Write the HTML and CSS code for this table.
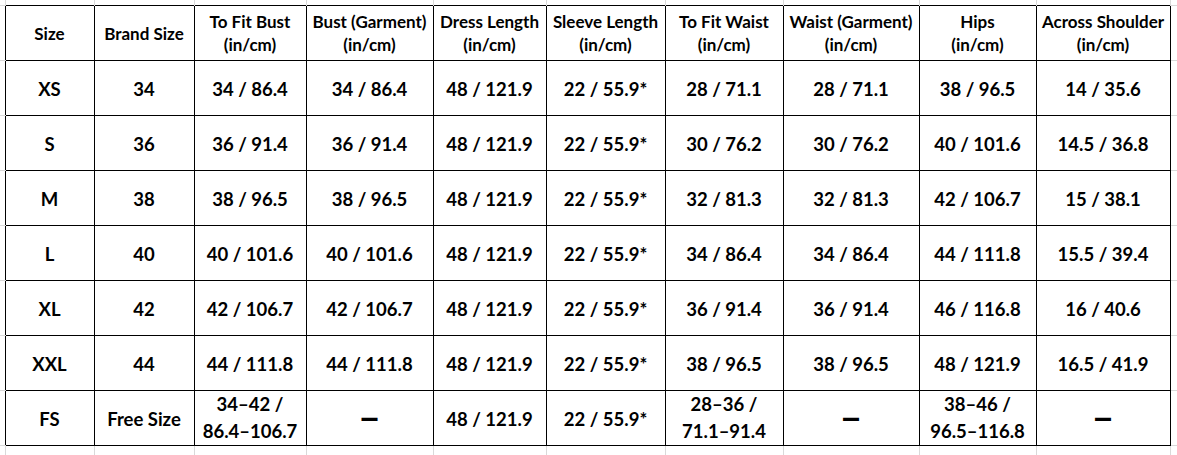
FILE: index.html
```html
<!DOCTYPE html>
<html lang="en">
<head>
<meta charset="utf-8">
<title>Size Chart</title>
<link rel="stylesheet" href="styles.css">
</head>
<body>
<table class="sheet">
  <colgroup>
    <col class="c-stub-l">
    <col class="c1"><col class="c2"><col class="c3"><col class="c4"><col class="c5">
    <col class="c6"><col class="c7"><col class="c8"><col class="c9"><col class="c10">
    <col class="c-stub-r">
  </colgroup>
  <tr class="r-top">
    <td class="corner"></td>
    <td class="stub-t"></td><td class="stub-t"></td><td class="stub-t"></td><td class="stub-t"></td><td class="stub-t"></td>
    <td class="stub-t"></td><td class="stub-t"></td><td class="stub-t"></td><td class="stub-t"></td><td class="stub-t"></td>
    <td class="corner"></td>
  </tr>
  <tr class="r-head">
    <td class="stub-l"></td>
    <th class="cell">Size</th>
    <th class="cell">Brand Size</th>
    <th class="cell">To Fit Bust<br>(in/cm)</th>
    <th class="cell">Bust (Garment)<br>(in/cm)</th>
    <th class="cell">Dress Length<br>(in/cm)</th>
    <th class="cell">Sleeve Length<br>(in/cm)</th>
    <th class="cell">To Fit Waist<br>(in/cm)</th>
    <th class="cell">Waist (Garment)<br>(in/cm)</th>
    <th class="cell">Hips<br>(in/cm)</th>
    <th class="cell">Across Shoulder<br>(in/cm)</th>
    <td class="stub-r"></td>
  </tr>
  <tr class="r-data">
    <td class="stub-l"></td>
    <td class="cell">XS</td><td class="cell">34</td><td class="cell">34 / 86.4</td><td class="cell">34 / 86.4</td><td class="cell">48 / 121.9</td>
    <td class="cell">22 / 55.9*</td><td class="cell">28 / 71.1</td><td class="cell">28 / 71.1</td><td class="cell">38 / 96.5</td><td class="cell">14 / 35.6</td>
    <td class="stub-r"></td>
  </tr>
  <tr class="r-data">
    <td class="stub-l"></td>
    <td class="cell">S</td><td class="cell">36</td><td class="cell">36 / 91.4</td><td class="cell">36 / 91.4</td><td class="cell">48 / 121.9</td>
    <td class="cell">22 / 55.9*</td><td class="cell">30 / 76.2</td><td class="cell">30 / 76.2</td><td class="cell">40 / 101.6</td><td class="cell">14.5 / 36.8</td>
    <td class="stub-r"></td>
  </tr>
  <tr class="r-data">
    <td class="stub-l"></td>
    <td class="cell">M</td><td class="cell">38</td><td class="cell">38 / 96.5</td><td class="cell">38 / 96.5</td><td class="cell">48 / 121.9</td>
    <td class="cell">22 / 55.9*</td><td class="cell">32 / 81.3</td><td class="cell">32 / 81.3</td><td class="cell">42 / 106.7</td><td class="cell">15 / 38.1</td>
    <td class="stub-r"></td>
  </tr>
  <tr class="r-data">
    <td class="stub-l"></td>
    <td class="cell">L</td><td class="cell">40</td><td class="cell">40 / 101.6</td><td class="cell">40 / 101.6</td><td class="cell">48 / 121.9</td>
    <td class="cell">22 / 55.9*</td><td class="cell">34 / 86.4</td><td class="cell">34 / 86.4</td><td class="cell">44 / 111.8</td><td class="cell">15.5 / 39.4</td>
    <td class="stub-r"></td>
  </tr>
  <tr class="r-data">
    <td class="stub-l"></td>
    <td class="cell">XL</td><td class="cell">42</td><td class="cell">42 / 106.7</td><td class="cell">42 / 106.7</td><td class="cell">48 / 121.9</td>
    <td class="cell">22 / 55.9*</td><td class="cell">36 / 91.4</td><td class="cell">36 / 91.4</td><td class="cell">46 / 116.8</td><td class="cell">16 / 40.6</td>
    <td class="stub-r"></td>
  </tr>
  <tr class="r-data">
    <td class="stub-l"></td>
    <td class="cell">XXL</td><td class="cell">44</td><td class="cell">44 / 111.8</td><td class="cell">44 / 111.8</td><td class="cell">48 / 121.9</td>
    <td class="cell">22 / 55.9*</td><td class="cell">38 / 96.5</td><td class="cell">38 / 96.5</td><td class="cell">48 / 121.9</td><td class="cell">16.5 / 41.9</td>
    <td class="stub-r"></td>
  </tr>
  <tr class="r-data">
    <td class="stub-l"></td>
    <td class="cell">FS</td><td class="cell">Free Size</td><td class="cell range">34–42 /<br>86.4–106.7</td><td class="cell"><span class="dash">—</span></td><td class="cell">48 / 121.9</td>
    <td class="cell">22 / 55.9*</td><td class="cell range">28–36 /<br>71.1–91.4</td><td class="cell"><span class="dash">—</span></td><td class="cell range">38–46 /<br>96.5–116.8</td><td class="cell"><span class="dash">—</span></td>
    <td class="stub-r"></td>
  </tr>
  <tr class="r-bottom">
    <td class="corner"></td>
    <td class="stub-b"></td><td class="stub-b"></td><td class="stub-b"></td><td class="stub-b"></td><td class="stub-b"></td>
    <td class="stub-b"></td><td class="stub-b"></td><td class="stub-b"></td><td class="stub-b"></td><td class="stub-b"></td>
    <td class="corner"></td>
  </tr>
</table>
</body>
</html>
```

FILE: styles.css
```css
html, body {
  margin: 0;
  padding: 0;
  background: #ffffff;
}

body {
  width: 1177px;
  height: 455px;
  overflow: hidden;
  font-family: Lato, "Liberation Sans", Arial, sans-serif;
  font-weight: 700;
  font-size: 18.5px;
  color: #000000;
}

.sheet {
  border-collapse: collapse;
  table-layout: fixed;
  width: 1177px;
}

.c-stub-l { width: 5px; }
.c1 { width: 89px; }
.c2 { width: 100px; }
.c3 { width: 112px; }
.c4 { width: 127px; }
.c5 { width: 113px; }
.c6 { width: 119px; }
.c7 { width: 118px; }
.c8 { width: 136px; }
.c9 { width: 117px; }
.c10 { width: 134px; }
.c-stub-r { width: 7px; }

.r-top { height: 5px; }
.r-head { height: 55px; }
.r-data { height: 55px; }
.r-bottom { height: 10px; }

td, th {
  padding: 0;
}

.cell {
  border: 1px solid #000000;
  text-align: center;
  vertical-align: middle;
  white-space: nowrap;
  font-weight: 700;
  line-height: 22px;
  padding-top: 3px;
}

th.cell {
  font-size: 17px;
  line-height: 23px;
  padding-top: 1px;
}

.cell.range {
  line-height: 27px;
  padding-top: 0;
}

.dash {
  display: inline-block;
  font-family: "Liberation Sans", Arial, sans-serif;
  font-size: 16px;
  transform: translateY(-2px) scaleY(2);
}

.stub-t,
.stub-b {
  border-left: 1px solid #d9d9d9;
  border-right: 1px solid #d9d9d9;
}

.stub-l,
.stub-r {
  border-top: 1px solid #d9d9d9;
  border-bottom: 1px solid #d9d9d9;
}
```
